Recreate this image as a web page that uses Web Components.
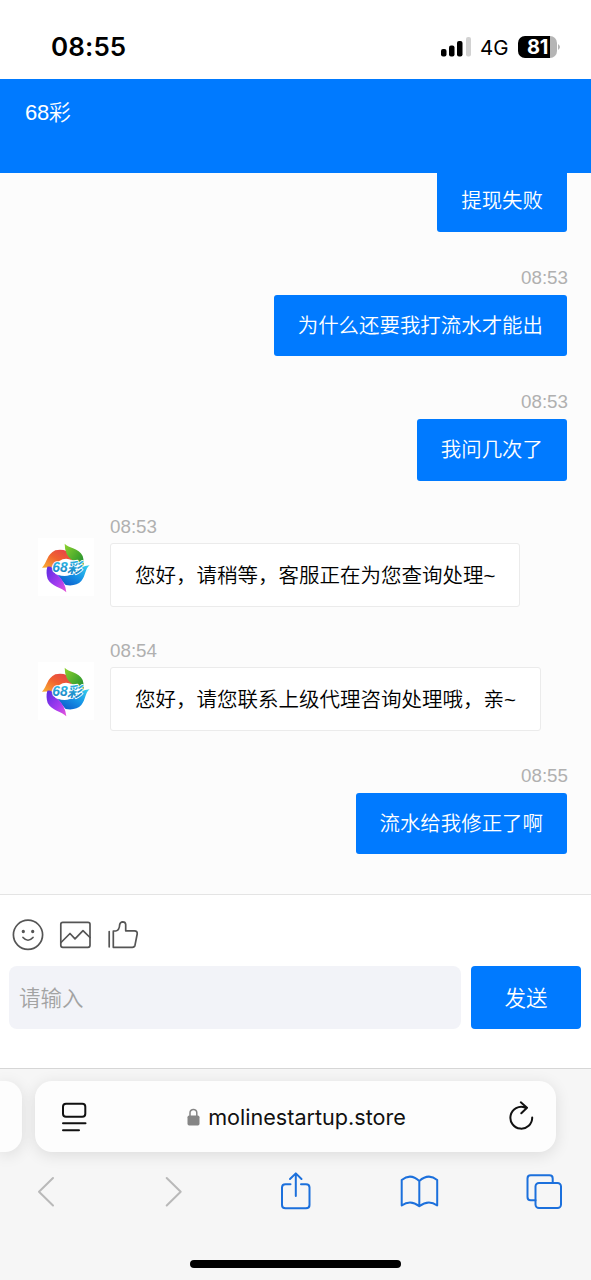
<!DOCTYPE html>
<html lang="zh-CN">
<head>
<meta charset="utf-8">
<title>68彩</title>
<style>
html,body{margin:0;padding:0;background:#fff}
body{width:591px;height:1280px;overflow:hidden;font-family:"Liberation Sans","Noto Sans CJK SC",sans-serif}
</style>
</head>
<body>
<chat-app></chat-app>
<script>
function define(name, html){
  const t=document.createElement('template');
  t.innerHTML=html;
  customElements.define(name,class extends HTMLElement{
    constructor(){super();this.attachShadow({mode:'open'}).appendChild(t.content.cloneNode(true));}
  });
}

define('status-bar',`<style>
:host{display:flex;height:79px;box-sizing:border-box;padding:32px 30px 0 51px;justify-content:space-between;align-items:flex-start;background:#fff;color:#000;font-family:Inter,sans-serif}
.t{font-size:26px;font-weight:600;line-height:30px;letter-spacing:.1px}
.r{display:flex;align-items:center;height:30px}
.g{font-size:20.5px;line-height:31px;width:30px;margin:0 8px 0 8px;white-space:nowrap}
.b{display:flex;width:39px;height:22px;border-radius:7px;overflow:hidden;background:linear-gradient(90deg,#000 32px,#b5b5b5 32px);color:#fff;font-weight:700;font-size:20px;line-height:22px;justify-content:center;letter-spacing:-.3px}
svg{display:block}
</style><span class="t">08:55</span>
<div class="r"><svg width="31" height="22" viewBox="0 0 31 22"><g fill="#000"><rect x="0" y="13" width="5.5" height="7.5" rx="2"/><rect x="8" y="9.5" width="5.5" height="11" rx="2"/><rect x="16" y="5" width="5.5" height="15.5" rx="2"/></g><rect x="25" y="1" width="5" height="19.5" rx="2" fill="#d2d2d2"/></svg>
<span class="g">4G</span><div class="b">81</div><svg width="4" height="8"><path d="M1 1Q5 4 1 7Z" fill="#b5b5b5"/></svg></div>`);

define('chat-header',`<style>
:host{display:block;width:590.5px;height:94px;box-sizing:border-box;padding:18.5px 25px;background:#007aff;color:#fff;font-size:22px;line-height:30px;font-weight:350}
span{letter-spacing:-.3px}
</style><span><slot></slot></span>`);

define('brand-avatar',`<style>:host{display:block;width:56px;height:58px;background:#fff}svg{display:block}
.n{font:italic 900 45px "Liberation Sans",sans-serif}.c{font:italic 700 44px "Noto Sans CJK SC",sans-serif}</style>
<svg width="56" height="58" viewBox="24 9 168 174"><defs>
<linearGradient id="r" x1="0" y1="1" x2="1" y2="0"><stop offset="0" stop-color="#f9b233"/><stop offset=".5" stop-color="#f0622f"/><stop offset="1" stop-color="#e23b50"/></linearGradient>
<linearGradient id="g" x1="0" y1="0" x2="1" y2="1"><stop offset="0" stop-color="#8fd32f"/><stop offset=".6" stop-color="#43a62c"/><stop offset="1" stop-color="#15803c"/></linearGradient>
<linearGradient id="b" x1="1" y1="0" x2="0" y2="1"><stop offset="0" stop-color="#35d3ee"/><stop offset=".5" stop-color="#1690e5"/><stop offset="1" stop-color="#0a4fc4"/></linearGradient>
<linearGradient id="p" x1="0" y1="0" x2="1" y2="1"><stop offset="0" stop-color="#5b2be0"/><stop offset=".6" stop-color="#a43cf0"/><stop offset="1" stop-color="#ea55d8"/></linearGradient>
<linearGradient id="t" x1="0" y1="0" x2="0" y2="1"><stop offset="0" stop-color="#35c6ee"/><stop offset="1" stop-color="#1577bd"/></linearGradient></defs>
<path fill="url(#r)" d="M36 98C52 82 50 58 76 46Q94 42 110 48Q121 55 126 76Q106 66 88 78Q70 88 66 96Q50 98 36 98Z"/>
<path fill="url(#g)" d="M104 26C116 40 146 38 158 63Q164 82 158 104Q145 82 127 76Q104 60 104 26Z"/>
<path fill="url(#b)" d="M179 91C164 103 168 121 154 138Q138 155 107 150Q98 140 83 119Q112 130 134 112Q150 94 179 91Z"/>
<path fill="url(#p)" d="M52 95Q68 92 70 108Q76 119 83 120Q105 138 109 172C96 157 64 155 53 132Q47 112 52 95Z"/>
<g fill="url(#t)" stroke="#fff" stroke-width="5" stroke-linejoin="round"><text class="n" x="67" y="112" textLength="46" lengthAdjust="spacingAndGlyphs" paint-order="stroke">68</text><text class="c" x="111" y="113" textLength="44" lengthAdjust="spacingAndGlyphs" paint-order="stroke">彩</text></g></svg>`);

define('chat-message',`<style>
:host{display:flex;flex:none;width:100%;height:124.5px;box-sizing:border-box;padding-right:24px;justify-content:flex-end}
.c{display:flex;flex-direction:column;align-items:flex-end}
.time{height:36px;line-height:37px;font-size:18.8px;color:#b0b0b0;margin-right:-1px}
.bub{height:61.5px;box-sizing:border-box;padding:0 24px;border-radius:3px;background:#007aff;color:#fff;font-size:20.45px;font-weight:350;line-height:62.5px;white-space:nowrap}
brand-avatar{display:none}
:host([incoming]){justify-content:flex-start;padding:0 0 0 38px}
:host([incoming]) .c{align-items:flex-start}
:host([incoming]) .bub{background:#fff;color:#000;border:1px solid #ebebeb;height:64px;line-height:64px;margin-top:-1px;font-size:20.5px}
:host([incoming]) brand-avatar{display:block;margin:30px 16px 0 0}
</style><brand-avatar></brand-avatar><div class="c"><div class="time"><slot name="time"></slot></div><div class="bub"><slot></slot></div></div>`);

define('message-list',`<style>
:host{display:flex;flex-direction:column;justify-content:flex-end;height:721px;box-sizing:border-box;padding-bottom:13px;overflow:hidden;background:#fcfcfc}
</style><slot></slot>`);

define('chat-composer',`<style>
:host{display:block;height:174px;box-sizing:border-box;border-top:1px solid #e4e4e4;background:#fff;padding:24px 10px 0 9px}
.i{display:flex;gap:12px;height:32px;padding-left:1px}
.row{display:flex;gap:10px;margin-top:15px;height:63px}
.in{flex:1;border-radius:8px;background:#f2f3f8;color:#a3a3a3;font-size:21.5px;font-weight:350;line-height:66px;padding-left:10px}
.send{width:110px;border-radius:4px;background:#007aff;color:#fff;font-size:21.5px;font-weight:350;line-height:66px;text-align:center}
svg{display:block;fill:none;stroke:#555;stroke-width:1.7;stroke-linecap:round;stroke-linejoin:round}
</style><div class="i">
<svg width="36" height="32" viewBox="10 919 36 32"><circle cx="28" cy="934.8" r="14.6"/><path d="M23 937.5Q28 943 33 937.5"/><circle cx="23.3" cy="931.5" r=".8" fill="#555"/><circle cx="32.7" cy="931.5" r=".8" fill="#555"/></svg>
<svg width="36" height="32" viewBox="58 919 36 32"><rect x="60.8" y="922.3" width="29.2" height="25" rx="2"/><path d="M61 942.5L70 933.5L75 938.8L83 930.7L90 937.5"/></svg>
<svg width="36" height="32" viewBox="106 919 36 32"><path d="M109.2 931.5V946.8M113.3 931.5V947.3H132.3Q134.5 947.3 135 945.2L137.2 934Q137.5 930.8 134.5 930.8H125.7V924.5Q125.5 921.8 122.7 921.8Q120.3 922 119.7 924.5Q119.4 930.5 115.8 931H113.3"/></svg>
</div><div class="row"><div class="in">请输入</div><div class="send">发送</div></div>`);

define('browser-bar',`<style>
:host{display:flex;flex-direction:column;height:212px;box-sizing:border-box;border-top:1px solid #d6d6d6;background:#f6f6f6;overflow:hidden}
.u{display:flex;gap:13px;margin-top:12px;height:71px;flex:none}
.p{flex:none;background:#fdfdfd;box-shadow:0 3px 16px rgba(0,0,0,.11)}
.prev{width:22px;border-radius:0 17px 17px 0}
.cur{display:flex;width:521px;box-sizing:border-box;border-radius:17px;align-items:center;justify-content:space-between;padding:0 20px 0 24px}
.d{display:flex;align-items:center;gap:8px;font:21.6px/30px Inter,sans-serif;color:#111;margin-left:-2px}
.n{display:flex;justify-content:space-between;padding:0 27.5px 0 25.5px;margin-top:20px;height:40px;flex:none}
.h{width:211px;height:8px;border-radius:4px;background:#000;align-self:center;margin-top:47.5px}
svg{display:block;fill:none;stroke:#1c70dc;stroke-width:2;stroke-linecap:round;stroke-linejoin:round}
.k{stroke:#111}.a{stroke:#b9b9b9}
</style>
<div class="u"><div class="p prev"></div><div class="p cur">
<svg class="k" width="30" height="32" viewBox="59 1101 30 32"><rect x="63" y="1103.8" width="22.3" height="13" rx="3"/><path d="M63 1123.3H85.5M63 1130.2H79"/></svg>
<div class="d"><svg width="13" height="18" viewBox="0 0 13 18"><path d="M3 8V4.8a3.4 3.4 0 0 1 6.8 0V8" stroke="#858585" stroke-width="1.5"/><rect x=".5" y="7.5" width="12" height="10" rx="1.7" fill="#858585" stroke="none"/></svg><span>molinestartup.store</span></div>
<svg class="k" width="30" height="32" viewBox="506 1101 30 32"><path d="M525 1107.5A10.9 10.9 0 1 0 532.2 1117.5M520.8 1102.3L527 1107.8L521.3 1113.3"/></svg>
</div></div>
<div class="n">
<svg class="a" width="40" height="40" viewBox="25.5 1172 40 40"><path d="M52.5 1178L38.5 1191.8L52.5 1205.5"/></svg>
<svg class="a" width="40" height="40" viewBox="150 1172 40 40"><path d="M166.7 1178L180.7 1191.8L166.7 1205.5"/></svg>
<svg width="40" height="40" viewBox="274.5 1172 40 40"><path d="M290 1184.2H285Q281.5 1184.2 281.5 1187.5V1205Q281.5 1208.3 285 1208.3H305.5Q309 1208.3 309 1205V1187.5Q309 1184.2 305.5 1184.2H300.5M295.3 1196V1173.7M289.5 1179L295.3 1173.4L301 1179"/></svg>
<svg width="40" height="40" viewBox="399 1172 40 40"><path d="M419.3 1181Q410.5 1172.8 401.7 1180V1205.5Q410.5 1199 419.3 1206.3Q428.5 1199 437.2 1205.5V1180Q428.5 1172.8 419.3 1181ZM419.3 1181V1206"/></svg>
<svg width="40" height="40" viewBox="523.5 1172 40 40"><rect x="535" y="1183" width="25.5" height="25" rx="3.5"/><path d="M552.2 1183V1178.5Q552.2 1175.3 549 1175.3H530.2Q527 1175.3 527 1178.5V1197Q527 1200.3 530.2 1200.3H535"/></svg>
</div><div class="h"></div>`);

define('chat-app',`<style>:host{display:flex;flex-direction:column;width:591px;height:1280px;overflow:hidden}:host>*{flex:none}</style>
<status-bar></status-bar><chat-header>68彩</chat-header>
<message-list>
<chat-message>提现失败</chat-message>
<chat-message><span slot="time">08:53</span>为什么还要我打流水才能出</chat-message>
<chat-message><span slot="time">08:53</span>我问几次了</chat-message>
<chat-message incoming><span slot="time">08:53</span>您好，请稍等，客服正在为您查询处理~</chat-message>
<chat-message incoming><span slot="time">08:54</span>您好，请您联系上级代理咨询处理哦，亲~</chat-message>
<chat-message><span slot="time">08:55</span>流水给我修正了啊</chat-message>
</message-list>
<chat-composer></chat-composer><browser-bar></browser-bar>`);
</script>
</body>
</html></script>
